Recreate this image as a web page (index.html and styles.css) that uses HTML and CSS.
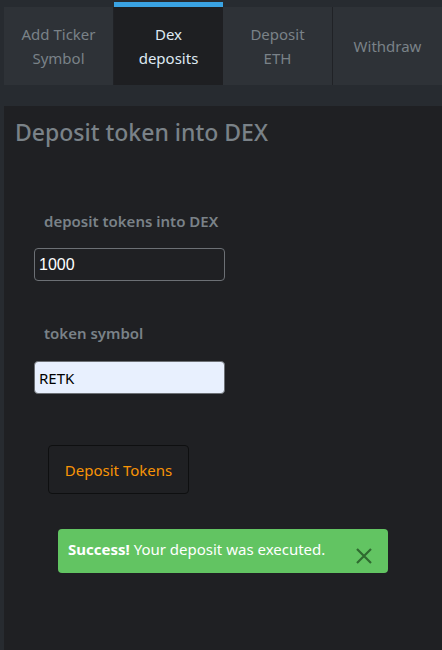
FILE: index.html
```html
<!DOCTYPE html>
<html>
<head>
<meta charset="utf-8">
<link rel="stylesheet" href="styles.css">
</head>
<body>
<nav class="tabs">
  <div class="tab">Add Ticker<br>Symbol</div>
  <div class="tab active">Dex<br>deposits</div>
  <div class="tab">Deposit<br>ETH</div>
  <div class="tab">Withdraw</div>
</nav>
<main class="panel">
  <h3 class="title">Deposit token into DEX</h3>
  <form class="form">
    <label class="label">deposit tokens into DEX</label>
    <input class="input" type="text" value="1000">
    <label class="label label-second">token symbol</label>
    <input class="input input-filled" type="text" value="RETK">
    <button class="btn" type="button">Deposit Tokens</button>
  </form>
  <div class="alert">
    <span><strong>Success!</strong> Your deposit was executed.</span>
    <svg class="close" width="18" height="18" viewBox="0 0 18 18"><path d="M2 2 L16 16 M16 2 L2 16" stroke="#2f6a30" stroke-width="2.2" fill="none"/></svg>
  </div>
</main>
</body>
</html>
```
FILE: styles.css
```css
html, body {
  margin: 0;
  padding: 0;
  background: #272b30;
  height: 650px;
  overflow: hidden;
}
body {
  font-family: "Noto Sans", "Open Sans", sans-serif;
  padding-left: 4px;
  box-sizing: border-box;
}
.tabs {
  display: flex;
  padding-top: 7px;
  height: 78px;
}
.tab {
  flex: 1;
  background: #2e3237;
  color: #7a8288;
  font-size: 15px;
  line-height: 24px;
  display: flex;
  align-items: center;
  justify-content: center;
  text-align: center;
  border-right: 1px solid #202226;
}
.tab:last-child { border-right: none; }
.active {
  background: #1e1f22;
  color: #dfe9f3;
  margin-top: -5px;
  border-top: 5px solid #3aa3e3;
  border-right: none;
}
.panel {
  margin-top: 21px;
  background: #1f2023;
  height: 544px;
  padding: 12px 11px;
  box-sizing: border-box;
}
.title {
  margin: 0;
  color: #7a8288;
  font-size: 23px;
  font-weight: 500;
  line-height: 28px;
}
.form {
  display: flex;
  flex-direction: column;
  align-items: flex-start;
  padding: 65px 19px 0;
}
.label {
  color: #7a8288;
  font-size: 15px;
  font-weight: 600;
  margin-left: 10px;
  line-height: 20px;
}
.label-second { margin-top: 42px; }
.input {
  margin-top: 17px;
  width: 191px;
  height: 33px;
  box-sizing: border-box;
  border: 1px solid #6c7075;
  border-radius: 4px;
  background: #1f2023;
  color: #ffffff;
  font-family: "Liberation Sans", Arial, sans-serif;
  font-size: 16px;
  padding: 0 4px;
}
.input-filled {
  margin-top: 18px;
  background: #e8f0fe;
  color: #000000;
  font-family: "Noto Sans", sans-serif;
  font-size: 15px;
}
.btn {
  margin: 51px 0 0 14px;
  width: 141px;
  height: 49px;
  background: #1f2023;
  border: 1px solid #0e0f10;
  border-radius: 4px;
  color: #f89406;
  font-family: "Noto Sans", sans-serif;
  font-size: 15px;
}
.alert {
  margin: 35px 0 0 43px;
  width: 330px;
  height: 44px;
  box-sizing: border-box;
  background: #62c462;
  border-radius: 4px;
  color: #ffffff;
  font-size: 15px;
  display: flex;
  align-items: center;
  justify-content: space-between;
  padding: 0 15px 0 10px;
}
.alert span { margin-top: -4px; }
.close { margin-top: 10px; }
```
